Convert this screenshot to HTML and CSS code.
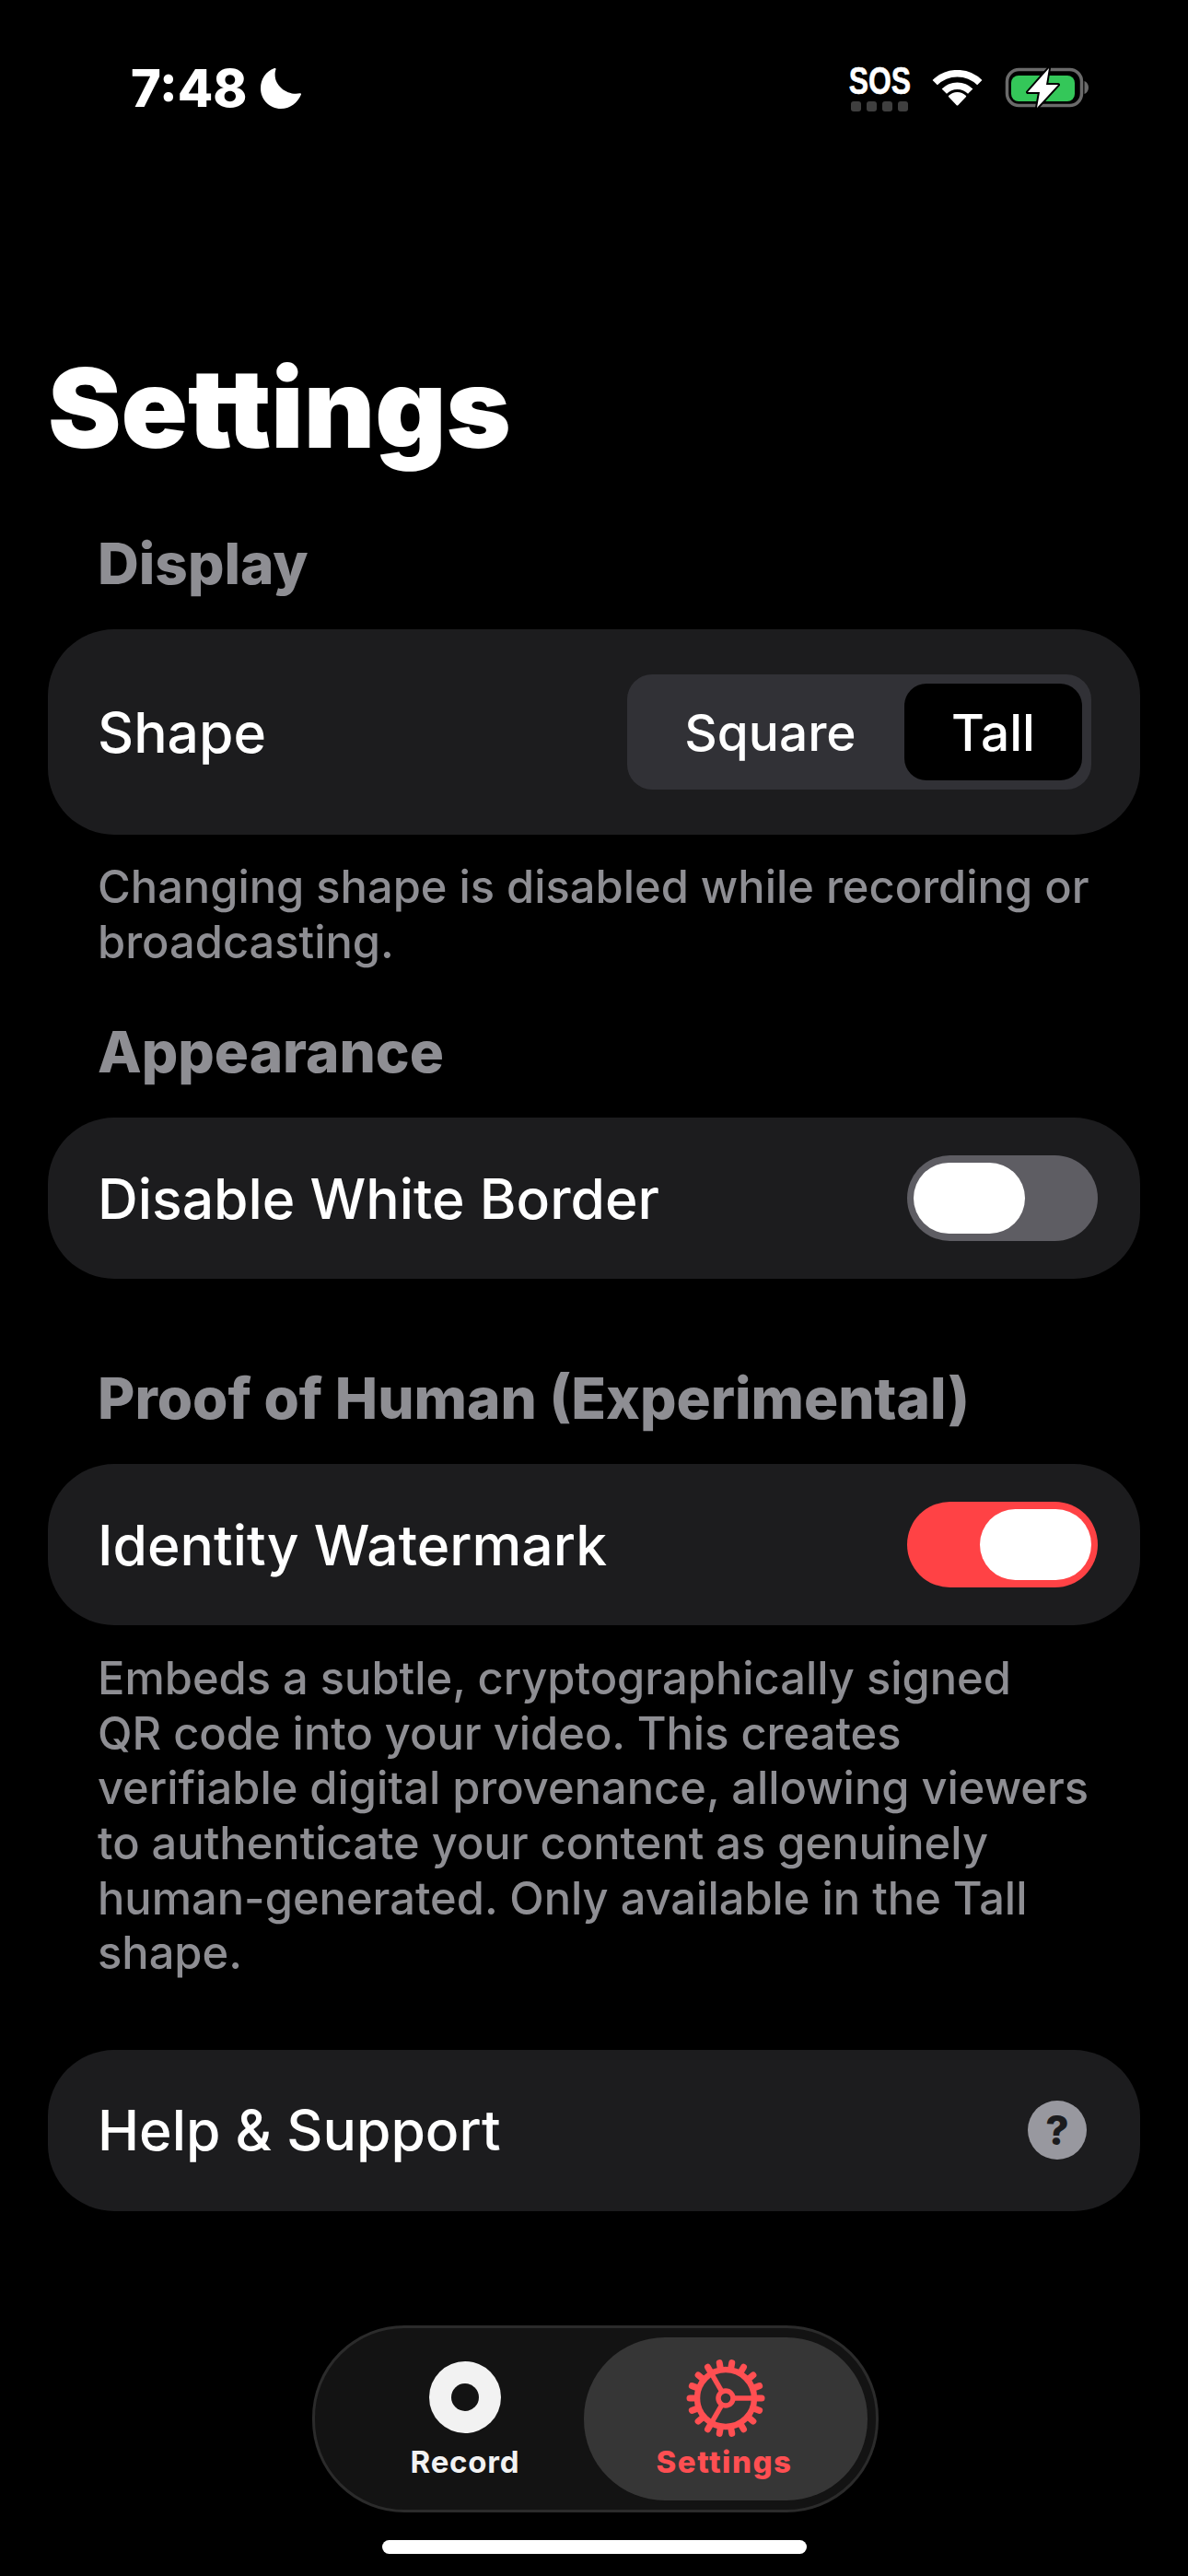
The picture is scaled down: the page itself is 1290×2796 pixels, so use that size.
FILE: index.html
```html
<!DOCTYPE html>
<html lang="en">
<head>
<meta charset="utf-8">
<title>Settings</title>
<link rel="stylesheet" href="styles.css">
</head>
<body>
<div class="screen">
  <header class="status">
    <div class="status-left">
      <span class="time">7:48</span>
      <svg class="moon" viewBox="0 0 44 44"><path d="M15 0C5.600 3.200 0 12 0 22c0 12.200 9.800 22 22 22 9.800 0 18.200-6.200 22-15.500.3-.9-.4-1.500-1.300-1.300C30 30 15.500 20 15.600 7c0-2 .2-4 .9-5.600C16.800.4 16-.3 15 0Z"/></svg>
    </div>
    <div class="status-right">
      <div class="sos">
        <span class="sos-text">SOS</span>
        <div class="sos-dots"><i></i><i></i><i></i><i></i></div>
      </div>
      <svg class="wifi" viewBox="0 0 55 39"><path class="wifi-arc" d="M3.200 13.700a34.400 34.400 0 0 1 48.600 0"/><path class="wifi-arc" d="M13.300 23.200a20 20 0 0 1 28.400 0"/><path d="M18.200 27.800a13.200 13.200 0 0 1 18.600 0c.5.500.5 1 0 1.500L28.500 38a1.400 1.400 0 0 1-2 0l-8.300-8.700c-.5-.5-.5-1 0-1.500Z" fill="#fff"/></svg>
      <svg class="battery" viewBox="0 0 91 46"><rect x="2.500" y="3.500" width="81" height="39" rx="13" fill="none" stroke="#6a6a6a" stroke-width="3.500"/><rect x="7" y="10" width="69" height="28" rx="8" fill="#34c759"/><path d="M86.500 16v14c2.800-1 4.500-3.800 4.500-7s-1.700-6-4.500-7Z" fill="#6a6a6a"/><path d="M48 2 25 28h13l-3 17 23-25H45l3-18Z" fill="#fff" stroke="#000" stroke-width="4" stroke-linejoin="round" paint-order="stroke"/></svg>
    </div>
  </header>

  <main class="content">
    <h1 class="title">Settings</h1>

    <h2 class="section-title">Display</h2>
    <section class="card card-tall">
      <span class="label">Shape</span>
      <div class="segmented">
        <span class="seg-option">Square</span>
        <span class="seg-option seg-active">Tall</span>
      </div>
    </section>
    <p class="note note-shape">Changing shape is disabled while recording or<br>broadcasting.</p>

    <h2 class="section-title section-appearance">Appearance</h2>
    <section class="card">
      <span class="label">Disable White Border</span>
      <div class="toggle"><span class="knob"></span></div>
    </section>

    <h2 class="section-title section-proof">Proof of Human (Experimental)</h2>
    <section class="card">
      <span class="label">Identity Watermark</span>
      <div class="toggle toggle-on"><span class="knob"></span></div>
    </section>
    <p class="note note-proof">Embeds a subtle, cryptographically signed<br>QR code into your video. This creates<br>verifiable digital provenance, allowing viewers<br>to authenticate your content as genuinely<br>human-generated. Only available in the Tall<br>shape.</p>

    <section class="card card-help">
      <span class="label">Help &amp; Support</span>
      <span class="help-icon">?</span>
    </section>
  </main>

  <nav class="tabbar">
    <div class="tab tab-record">
      <span class="record-icon"><i></i></span>
      <span class="tab-label">Record</span>
    </div>
    <div class="tab tab-active">
      <svg class="gear" viewBox="-44 -44 88 88" fill="none" stroke="#ff4f52">
        <circle r="31" stroke-width="6.500"/>
        <g stroke-width="7" stroke-linecap="round">
          <path d="M34 0H39"/><path d="M34 0H39" transform="rotate(20)"/><path d="M34 0H39" transform="rotate(40)"/><path d="M34 0H39" transform="rotate(60)"/><path d="M34 0H39" transform="rotate(80)"/><path d="M34 0H39" transform="rotate(100)"/><path d="M34 0H39" transform="rotate(120)"/><path d="M34 0H39" transform="rotate(140)"/><path d="M34 0H39" transform="rotate(160)"/><path d="M34 0H39" transform="rotate(180)"/><path d="M34 0H39" transform="rotate(200)"/><path d="M34 0H39" transform="rotate(220)"/><path d="M34 0H39" transform="rotate(240)"/><path d="M34 0H39" transform="rotate(260)"/><path d="M34 0H39" transform="rotate(280)"/><path d="M34 0H39" transform="rotate(300)"/><path d="M34 0H39" transform="rotate(320)"/><path d="M34 0H39" transform="rotate(340)"/>
        </g>
        <circle r="8" stroke-width="5.500"/>
        <g stroke-width="5.500">
          <path d="M8 0H31"/><path d="M8 0H31" transform="rotate(120)"/><path d="M8 0H31" transform="rotate(240)"/>
        </g>
      </svg>
      <span class="tab-label tab-label-active">Settings</span>
    </div>
  </nav>
  <div class="home-indicator"></div>
</div>
</body>
</html>
```

FILE: styles.css
```css
* { box-sizing: border-box; }
html, body { margin: 0; padding: 0; background: #000; }
.screen {
  width: 1290px;
  height: 2796px;
  background: #000;
  color: #fff;
  font-family: Inter, "Noto Sans", sans-serif;
  display: flex;
  flex-direction: column;
  overflow: hidden;
}
.status {
  height: 140px;
  padding: 72px 108px 0 142px;
  display: flex;
  justify-content: space-between;
  align-items: flex-start;
  flex: none;
}
.status-left { display: flex; align-items: center; gap: 14px; }
.time { font-size: 56px; line-height: 48px; font-weight: 800; }
.moon { width: 44px; height: 44px; fill: #fff; }
.status-right { display: flex; align-items: flex-start; }
.sos { width: 68px; margin-right: 23px; display: flex; flex-direction: column; align-items: center; }
.sos-text {
  font-size: 42px; line-height: 36px; font-weight: 700;
  margin-top: -2px;
  -webkit-text-stroke: .6px #fff;
  transform: scaleX(0.76); font-family: "Liberation Sans", Inter, sans-serif;
}
.sos-dots { display: flex; gap: 6px; margin-top: 4px; }
.sos-dots i { width: 11px; height: 11px; border-radius: 3px; background: #3f3f3f; display: block; }
.wifi { width: 55px; height: 39px; margin-top: 4px; margin-right: 24px; }
.wifi-arc { fill: none; stroke: #fff; stroke-width: 7.5; }
.battery { width: 91px; height: 46px; }

.content { flex: 1; padding: 0 52px; }
.title { margin: 0 0 64px; font-size: 119.500px; line-height: 138px; font-weight: 900; padding: 234px 0 0; }
.section-title {
  margin: 0 0 35px 54px;
  font-size: 62px;
  line-height: 72px;
  font-weight: 800;
  color: #8e8e93;
}
.card {
  height: 175px;
  background: #1c1c1e;
  border-radius: 72px;
  padding: 0 46px 0 54px;
  display: flex;
  align-items: center;
  justify-content: space-between;
}
.card-tall { height: 223px; padding-right: 53px; }
.label { font-size: 60.600px; font-weight: 500; }
.segmented {
  width: 504px; height: 125px;
  background: #313136;
  border-radius: 27px;
  padding: 10px;
  display: flex;
  align-items: stretch;
}
.seg-option { font-size: 55px; font-weight: 500; display: flex; align-items: center; justify-content: center; flex: 1; }
.seg-active { flex: none; width: 193px; background: #000; border-radius: 24px; }
.note { margin: 0 0 0 54px; font-size: 48.800px; line-height: 59.600px; font-weight: 500; color: #8e8e93; }
.note-shape { margin-top: 27px; }
.section-appearance { margin-top: 54px; }
.section-proof { margin-top: 94px; }
.note-proof { margin-top: 28px; }
.toggle {
  width: 207px; height: 93px;
  border-radius: 47px;
  background: #5e5d63;
  padding: 8px 7px;
  display: flex;
}
.knob { width: 121px; height: 77px; border-radius: 39px; background: #fff; display: block; }
.toggle-on { background: #ff4245; justify-content: flex-end; }
.card-help { margin-top: 75px; padding-right: 58px; }
.help-icon {
  width: 64px; height: 64px; border-radius: 50%;
  background: #98989f; color: #1c1c1e;
  font-size: 44px; font-weight: 800;
  display: flex; align-items: center; justify-content: center;
}
.tabbar {
  flex: none;
  width: 615px; height: 203px;
  margin: 0 0 30px 339px;
  background: #131313;
  border: 3px solid #2b2b2b;
  border-radius: 100px;
  padding: 10px 9px 10px 34px;
  display: flex;
  justify-content: space-between;
}
.tab { display: flex; flex-direction: column; align-items: center; padding-top: 26px; }
.tab-record { width: 258px; }
.tab-active { width: 308px; background: #363636; border-radius: 88px; padding-top: 22px; }
.record-icon {
  width: 78px; height: 78px; border-radius: 50%;
  background: #f2f2f2;
  display: flex; align-items: center; justify-content: center;
}
.record-icon i { width: 30px; height: 30px; border-radius: 50%; background: #131313; display: block; }
.gear { width: 88px; height: 88px; display: block; }
.tab-label { font-size: 33px; line-height: 40px; font-weight: 700; color: #f2f2f2; margin-top: 11px; letter-spacing: .8px; }
.tab-label-active { color: #ff4f52; margin-top: 5px; font-weight: 800; letter-spacing: 1.500px; margin-right: 3px; }
.home-indicator { flex: none; width: 461px; height: 15px; border-radius: 8px; background: #fff; margin: 0 0 24px 415px; }
```
